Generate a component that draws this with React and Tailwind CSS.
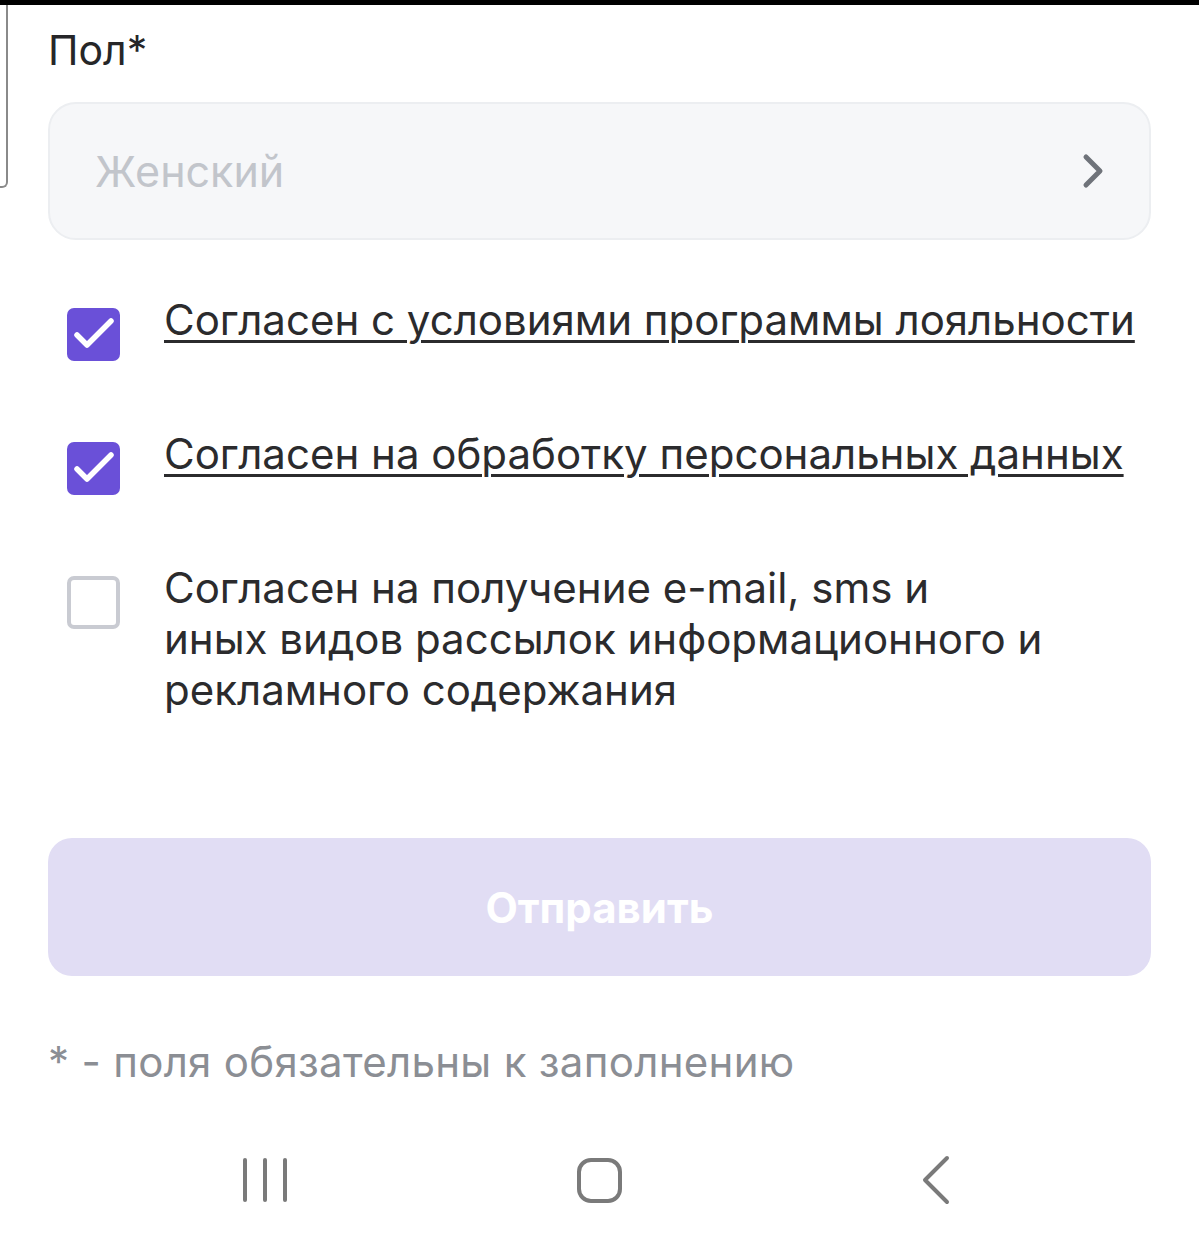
const FONT = { fontFamily: "Inter, 'Noto Sans', sans-serif" };

function Check({ checked }) {
  if (!checked) {
    return (
      <div className="w-[53px] h-[53px] shrink-0 rounded-[7px] border-[4px] border-[#c9cbd2] bg-white" />
    );
  }
  return (
    <div className="w-[53px] h-[53px] shrink-0 rounded-[7px] bg-[#6a50d8]">
      <svg width="53" height="53" viewBox="0 0 53 53" fill="none">
        <path d="M10 27l10 10L44 13" stroke="white" strokeWidth="5.5" strokeLinecap="round" strokeLinejoin="round" />
      </svg>
    </div>
  );
}

function Agreement({ checked, underline, children }) {
  return (
    <div className="flex items-start">
      <div className="w-[116px] shrink-0 pl-[19px] pt-[14px]">
        <Check checked={checked} />
      </div>
      <p
        className={`text-[42px] leading-[51px] text-[#2b2b2d] ${
          underline ? "underline decoration-[3px] underline-offset-[5px]" : ""
        }`}
      >
        {children}
      </p>
    </div>
  );
}

export default function App() {
  return (
    <div style={FONT} className="w-[1199px] h-[1248px] bg-white flex flex-col relative overflow-hidden">
      <div className="h-[5px] bg-black shrink-0" />
      {/* edge of the card behind */}
      <div className="absolute left-[-10px] top-[5px] w-[18px] h-[183px] border-r-[2px] border-b-[2px] border-[#8a8a8a] rounded-br-[6px]" />

      <div className="px-[48px] pt-[25px]">
        <div className="text-[41px] leading-[40px] text-[#262628]">Пол*</div>

        <div className="mt-[32px] h-[138px] rounded-[28px] bg-[#f6f7f9] border-[2px] border-[#eceef1] flex items-center justify-between pl-[45px] pr-[44px]">
          <span className="text-[43px] text-[#c2c5cb]">Женский</span>
          <svg width="24" height="38" viewBox="0 0 24 38" fill="none">
            <path d="M5 5l14 14L5 33" stroke="#6f737a" strokeWidth="5" strokeLinecap="round" strokeLinejoin="round" />
          </svg>
        </div>

        <div className="mt-[54px] flex flex-col gap-[67px] -mx-[48px] pl-[48px]">
          <Agreement checked underline>
            Согласен с условиями программы лояльности
          </Agreement>
          <Agreement checked underline>
            Согласен на обработку персональных данных
          </Agreement>
          <Agreement>
            Согласен на получение e-mail, sms и
            <br />
            иных видов рассылок информационного и
            <br />
            рекламного содержания
          </Agreement>
        </div>

        <button className="mt-[123px] w-full h-[138px] rounded-[24px] bg-[#e1ddf4] text-white text-[42px] font-bold">
          Отправить
        </button>

        <p className="mt-[61px] text-[42px] leading-[50px] text-[#8b8e94] tracking-[0.3px]">
          * - поля обязательны к заполнению
        </p>
      </div>

      <div className="mt-auto h-[136px] shrink-0 flex items-center pl-[243px]">
        <div className="w-[44px] h-[44px] flex justify-between">
          <span className="w-[4px] h-[44px] rounded bg-[#7a7a7a]" />
          <span className="w-[4px] h-[44px] rounded bg-[#7a7a7a]" />
          <span className="w-[4px] h-[44px] rounded bg-[#7a7a7a]" />
        </div>
        <div className="ml-[290px] w-[45px] h-[45px] rounded-[14px] border-[4px] border-[#7a7a7a]" />
        <svg width="32" height="52" viewBox="0 0 32 52" className="ml-[298px]" fill="none">
          <path d="M27 4L5 26l22 22" stroke="#7a7a7a" strokeWidth="4" strokeLinecap="round" strokeLinejoin="round" />
        </svg>
      </div>
    </div>
  );
}
